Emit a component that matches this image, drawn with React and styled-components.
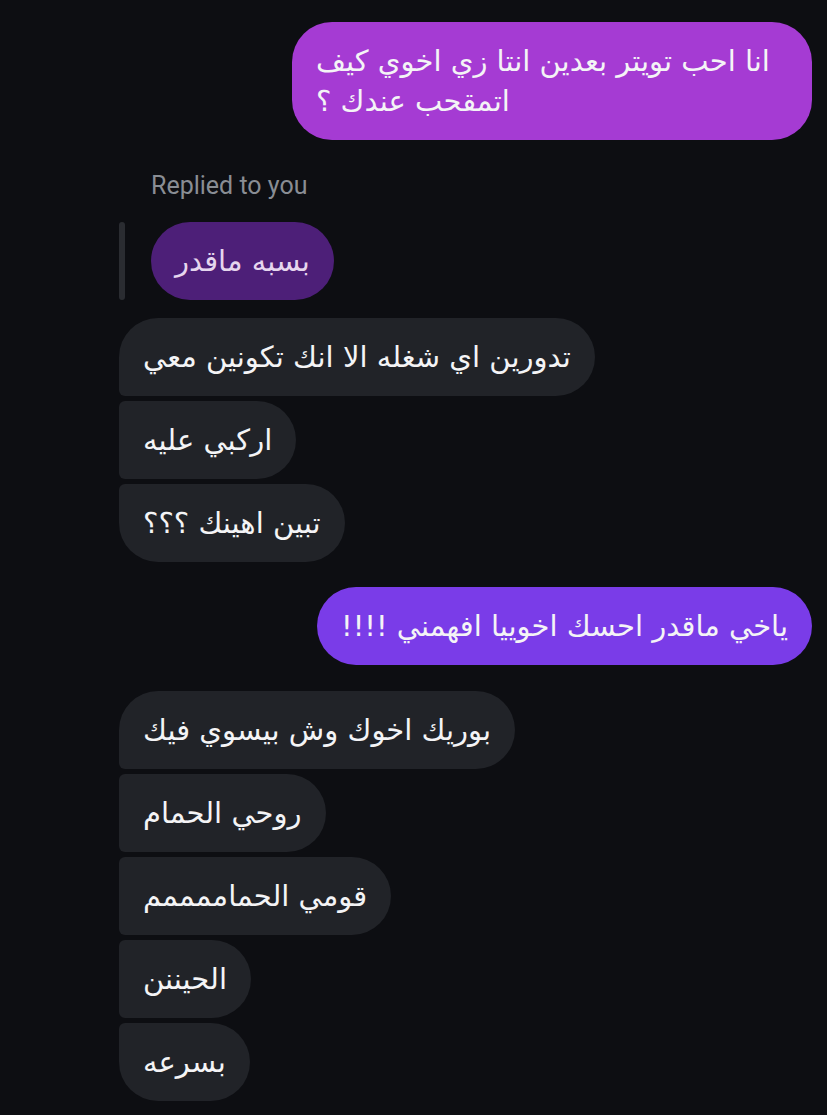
import React from 'react';
import styled, { createGlobalStyle } from 'styled-components';

const GlobalStyle = createGlobalStyle`
  html, body {
    margin: 0;
    padding: 0;
    background: #0d0e12;
  }
  #root {
    min-height: 1115px;
  }
`;

const arabicFont = `"DejaVu Sans", "Noto Sans", sans-serif`;

const Thread = styled.div`
  display: flex;
  flex-direction: column;
  align-items: flex-start;
  padding: 22px 15px 0 119px;
  min-height: 1115px;
  box-sizing: border-box;
  background: #0d0e12;
`;

const Bubble = styled.div`
  box-sizing: border-box;
  max-width: 520px;
  padding: 19px 24px;
  font-family: ${arabicFont};
  font-size: 29px;
  line-height: 40px;
  color: #f4f4f6;
  text-align: left;
  unicode-bidi: plaintext;
`;

const SentBubble = styled(Bubble)`
  align-self: flex-end;
  background: ${p => p.tone === 'violet' ? '#7a3ce8' : '#a53bd3'};
  border-radius: 40px;
  margin-top: ${p => p.gap || 0}px;
`;

const radiusFor = pos => {
  if (pos === 'first') return '39px 39px 39px 6px';
  if (pos === 'last') return '6px 39px 39px 39px';
  return '6px 39px 39px 6px';
};

const ReceivedBubble = styled(Bubble)`
  background: #212328;
  border-radius: ${p => radiusFor(p.pos)};
`;

const Group = styled.div`
  display: flex;
  flex-direction: column;
  align-items: flex-start;
  gap: 5px;
  margin-top: ${p => p.gap}px;
`;

const ReplyLabel = styled.div`
  margin: 32px 0 0 32px;
  font-family: Roboto, "Liberation Sans", sans-serif;
  font-size: 25px;
  line-height: 28px;
  color: #898d94;
`;

const ReplyRow = styled.div`
  display: flex;
  gap: 26px;
  margin-top: 22px;
`;

const QuoteBar = styled.div`
  width: 6px;
  border-radius: 3px;
  background: #2a2c31;
`;

const QuotedBubble = styled(Bubble)`
  background: #4d1f78;
  color: #e6d6ee;
  border-radius: 39px;
`;

const firstGroup = [
  'تدورين اي شغله الا انك تكونين معي',
  'اركبي عليه',
  'تبين اهينك ؟؟؟',
];

const secondGroup = [
  'بوريك اخوك وش بيسوي فيك',
  'روحي الحمام',
  'قومي الحماممممم',
  'الحيننن',
  'بسرعه',
];

const posOf = (i, n) => (i === 0 ? 'first' : i === n - 1 ? 'last' : 'middle');

const ReceivedGroup = ({ items, gap }) => (
  <Group gap={gap}>
    {items.map((text, i) => (
      <ReceivedBubble key={i} pos={posOf(i, items.length)} dir="auto">
        {text}
      </ReceivedBubble>
    ))}
  </Group>
);

export default function App() {
  return (
    <>
      <GlobalStyle />
      <Thread>
        <SentBubble>انا احب تويتر بعدين انتا زي اخوي كيف اتمقحب عندك ؟</SentBubble>
        <ReplyLabel>Replied to you</ReplyLabel>
        <ReplyRow>
          <QuoteBar />
          <QuotedBubble>بسبه ماقدر</QuotedBubble>
        </ReplyRow>
        <ReceivedGroup items={firstGroup} gap={18} />
        <SentBubble tone="violet" gap={25}>ياخي ماقدر احسك اخوييا افهمني !!!!</SentBubble>
        <ReceivedGroup items={secondGroup} gap={26} />
      </Thread>
    </>
  );
}
